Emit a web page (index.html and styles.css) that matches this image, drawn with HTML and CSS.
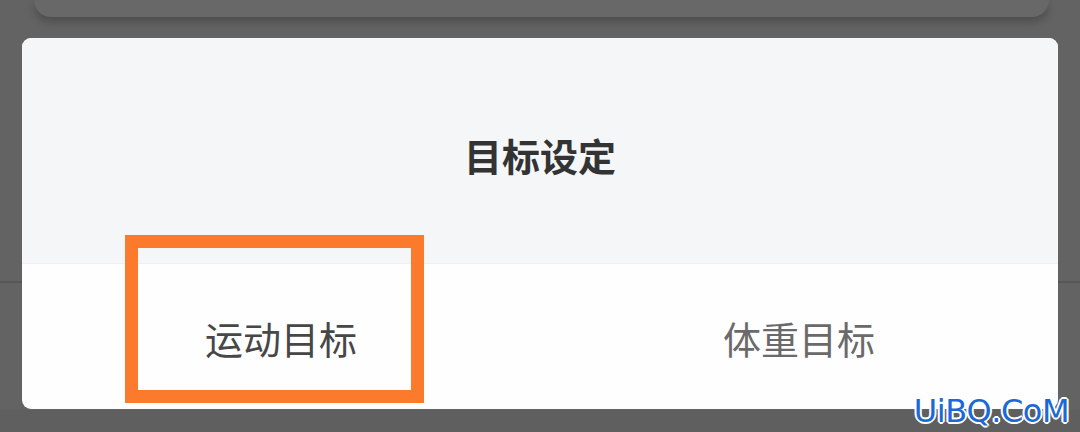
FILE: index.html
```html
<!DOCTYPE html>
<html lang="zh-CN">
<head>
<meta charset="utf-8">
<title>目标设定</title>
<link rel="stylesheet" href="styles.css">
</head>
<body>
  <div class="topcard"></div>
  <div class="sheet">
    <div class="sheet-head">
      <div class="sheet-title">目标设定</div>
    </div>
    <div class="tabs">
      <div class="tab tab-active">运动目标</div>
      <div class="tab">体重目标</div>
    </div>
    <div class="highlight"></div>
  </div>
  <div class="watermark">UiBQ.CoM</div>
</body>
</html>
```
FILE: styles.css
```css
html, body {
  margin: 0;
  padding: 0;
}
body {
  width: 1080px;
  height: 432px;
  overflow: hidden;
  position: relative;
  font-family: "Noto Sans CJK SC", "Noto Sans", sans-serif;
  background: linear-gradient(to bottom, #636363 0, #636363 281px, #575757 281px, #575757 283px, #636363 283px, #636363 410px, #5f5f5f 410px);
}
.topcard {
  height: 17px;
  margin: 0 31px 0 34px;
  background: #686868;
  border-radius: 0 0 22px 22px;
  box-shadow: 0 5px 8px rgba(0, 0, 0, 0.22);
}
.sheet {
  position: relative;
  margin: 21px 22px 0;
  height: 371px;
  border-radius: 9px;
  background: #fefefe;
  overflow: hidden;
}
.sheet-head {
  height: 226px;
  box-sizing: border-box;
  padding-top: 8px;
  background: #f5f6f8;
  border-bottom: 1px solid #efeff9;
  display: flex;
  align-items: center;
  justify-content: center;
}
.sheet-title {
  font-size: 38px;
  line-height: 1;
  font-weight: 700;
  color: #333333;
}
.tabs {
  display: flex;
  height: 144px;
}
.tab {
  flex: 1;
  display: flex;
  align-items: center;
  justify-content: center;
  padding-top: 4px;
  box-sizing: border-box;
  font-size: 38px;
  line-height: 1;
  color: #6a6a6a;
}
.tab-active {
  color: #474747;
}
.highlight {
  position: absolute;
  left: 103px;
  top: 197px;
  width: 299px;
  height: 168px;
  box-sizing: border-box;
  border: 13px solid #fc7a2c;
}
.watermark {
  position: absolute;
  right: 11px;
  bottom: 5px;
  font-family: "DejaVu Sans", sans-serif;
  font-size: 32px;
  letter-spacing: -0.5px;
  line-height: 1;
  color: #1a69d6;
  text-shadow:
    -2px 0 #fff, 2px 0 #fff, 0 -2px #fff, 0 2px #fff,
    -1px -1px #fff, 1px 1px #fff, -1px 1px #fff, 1px -1px #fff;
}
```
